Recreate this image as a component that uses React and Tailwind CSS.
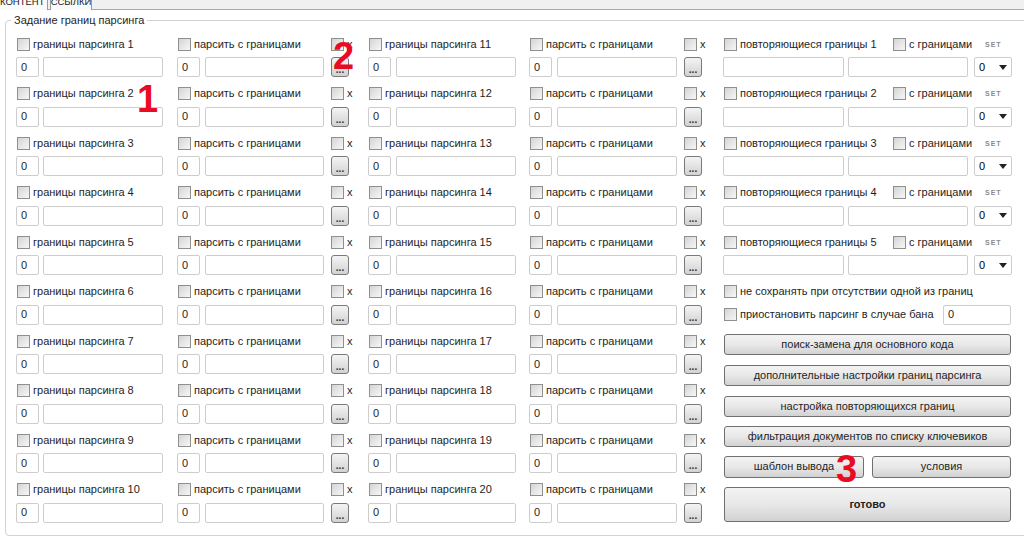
import React from "react";

function Cb({ label, className = "" }) {
  return (
    <div className={"flex items-center " + className}>
      <span className="w-[13px] h-[13px] shrink-0 border border-[#8e8f8f] bg-gradient-to-br from-[#d4d4d4] via-[#e6e6e6] to-[#f6f6f6]" />
      {label != null && <span className="ml-[3px] whitespace-nowrap text-[#1e1e1e]">{label}</span>}
    </div>
  );
}

function Inp({ w, v = "", className = "" }) {
  return (
    <div className={"h-[20px] shrink-0 border border-[#cdcdcd] rounded-[2px] bg-white flex items-center pl-[4px] text-[#1e1e1e] " + w + " " + className}>
      {v}
    </div>
  );
}

function Dots() {
  return (
    <div className="w-[18px] h-[20px] shrink-0 rounded-[3px] border border-[#7a7a7a] bg-gradient-to-b from-[#f4f4f4] to-[#d2d2d2] flex items-end justify-center text-[10px] leading-[12px] font-bold text-[#333]">
      ...
    </div>
  );
}

function Btn({ children, className = "", bold = false }) {
  return (
    <div className={"rounded-[3px] border border-[#707070] bg-gradient-to-b from-[#f3f3f3] via-[#e8e8e8] to-[#d2d2d2] flex items-center justify-center text-[#1e1e1e] " + (bold ? "font-bold " : "") + className}>
      {children}
    </div>
  );
}

function LeftRow({ n }) {
  return (
    <div className="h-[49.5px]">
      <div className="h-[20px] flex items-center">
        <div className="w-[161px] pl-[1px]"><Cb label={"границы парсинга " + n} /></div>
        <div className="w-[154px] pl-[1px]"><Cb label="парсить с границами" /></div>
        <div className="w-[37px]"><Cb label="x" /></div>
        <div className="w-[161px] pl-[1px]"><Cb label={"границы парсинга " + (n + 10)} /></div>
        <div className="w-[155px] pl-[1px]"><Cb label="парсить с границами" /></div>
        <div className="w-[39px]"><Cb label="x" /></div>
      </div>
      <div className="mt-[3px] h-[20px] flex items-center">
        <div className="w-[161px] flex gap-[4px]"><Inp w="w-[23px]" v="0" /><Inp w="w-[120px]" /></div>
        <div className="w-[154px] flex gap-[5px]"><Inp w="w-[23px]" v="0" /><Inp w="w-[119px]" /></div>
        <div className="w-[37px]"><Dots /></div>
        <div className="w-[161px] flex gap-[5px]"><Inp w="w-[23px]" v="0" /><Inp w="w-[120px]" /></div>
        <div className="w-[155px] flex gap-[5px]"><Inp w="w-[23px]" v="0" /><Inp w="w-[120px]" /></div>
        <div className="w-[39px]"><Dots /></div>
      </div>
    </div>
  );
}

function RightRow({ n }) {
  return (
    <div className="h-[49.5px]">
      <div className="h-[20px] flex items-center">
        <div className="w-[170px] pl-[1px]"><Cb label={"повторяющиеся границы " + n} /></div>
        <div className="w-[92px]"><Cb label="с границами" /></div>
        <span className="text-[7px] font-bold tracking-[1px] text-[#8a8a8a]">SET</span>
      </div>
      <div className="mt-[3px] h-[20px] flex items-center">
        <Inp w="w-[121px]" />
        <Inp w="w-[120px]" className="ml-[4px]" />
        <div className="ml-[6px] w-[38px] h-[20px] border border-[#cdcdcd] rounded-[2px] bg-white flex items-center justify-between pl-[4px] pr-[4px]">
          <span>0</span>
          <svg width="8" height="5" viewBox="0 0 8 5"><path d="M0 0H8L4 5Z" fill="#222" /></svg>
        </div>
      </div>
    </div>
  );
}

export default function App() {
  return (
    <div className="relative w-[1024px] h-[542px] overflow-hidden bg-white text-[11px] leading-[13px] font-['Liberation_Sans',Arial,sans-serif]">
      {/* tabs */}
      <div className="h-[10px] flex bg-[#f0f0f0] border-b border-[#a9a9a9]">
        <div className="w-[48px] h-[10px] overflow-hidden bg-[#fafafa] border-r border-[#9a9a9a] flex justify-start">
          <span className="block -mt-[4px] text-[9.5px] leading-[12px] text-[#222] whitespace-nowrap">КОНТЕНТ</span>
        </div>
        <div className="ml-[2px] w-[42px] h-[10px] overflow-hidden bg-[#fafafa] border-l border-r border-[#9a9a9a] flex justify-center">
          <span className="block -mt-[4px] text-[9.5px] leading-[12px] text-[#222] whitespace-nowrap">ССЫЛКИ</span>
        </div>
      </div>

      {/* group box */}
      <div className="relative ml-[5px] mt-[10px] w-[1040px] h-[516px] border border-[#d2d2d2] rounded-[4px] pl-[10px] pt-[13px]">
        <div className="absolute left-[5px] -top-[7px] bg-white px-[3px] text-[#1e1e1e]">Задание границ парсинга</div>
        <div className="flex">
          <div className="w-[707px]">
            {[1, 2, 3, 4, 5, 6, 7, 8, 9, 10].map((n) => (
              <LeftRow key={n} n={n} />
            ))}
          </div>
          <div className="w-[300px]">
            {[1, 2, 3, 4, 5].map((n) => (
              <RightRow key={n} n={n} />
            ))}
            <div className="h-[20px] flex items-center pl-[1px]">
              <Cb label="не сохранять при отсутствии одной из границ" />
            </div>
            <div className="mt-[3px] h-[20px] flex items-center">
              <div className="w-[220px] pl-[1px]"><Cb label="приостановить парсинг в случае бана" /></div>
              <Inp w="w-[68px]" v="0" />
            </div>
            <div className="ml-[1px] w-[287px]">
              <Btn className="mt-[9px] h-[21px]">поиск-замена для основного кода</Btn>
              <Btn className="mt-[10px] h-[21px]">дополнительные настройки границ парсинга</Btn>
              <Btn className="mt-[10px] h-[21px]">настройка повторяющихся границ</Btn>
              <Btn className="mt-[9px] h-[21px]">фильтрация документов по списку ключевиков</Btn>
              <div className="mt-[9px] flex justify-between">
                <Btn className="w-[140px] h-[22px]">шаблон вывода</Btn>
                <Btn className="w-[139px] h-[22px]">условия</Btn>
              </div>
              <Btn bold className="mt-[9px] h-[35px]">готово</Btn>
            </div>
          </div>
        </div>
      </div>

      {/* red annotation numerals */}
      <div className="absolute left-[137px] top-[80px] text-[38px] leading-none font-bold text-[#ea0a23]">1</div>
      <div className="absolute left-[333px] top-[37px] text-[38px] leading-none font-bold text-[#ea0a23]">2</div>
      <div className="absolute left-[836px] top-[450px] text-[38px] leading-none font-bold text-[#ea0a23]">3</div>
    </div>
  );
}
